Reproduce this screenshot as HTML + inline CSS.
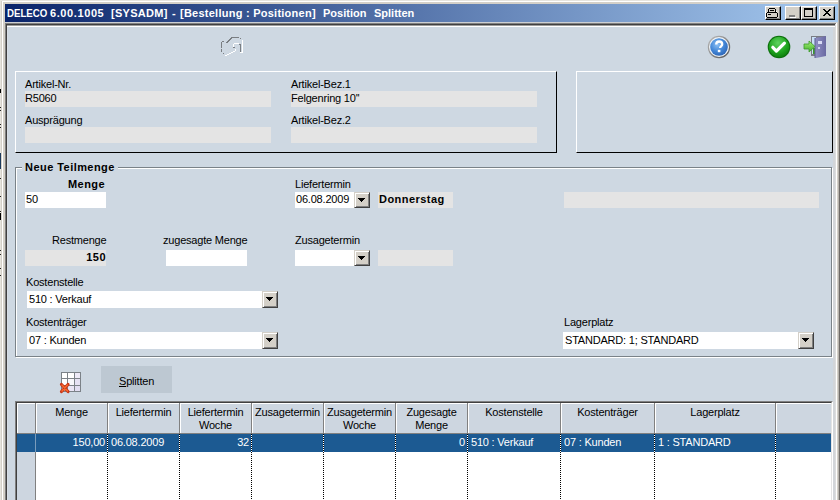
<!DOCTYPE html>
<html><head><meta charset="utf-8">
<style>
*{margin:0;padding:0;box-sizing:border-box}
html,body{width:840px;height:500px;overflow:hidden;background:#D4D0C8}
body{position:relative;font-family:"Liberation Sans",sans-serif;font-size:11px;color:#000}
.a{position:absolute}
.t{position:absolute;white-space:nowrap;line-height:13px;letter-spacing:-0.2px}
.b{font-weight:bold;letter-spacing:0.45px}
.ro{position:absolute;background:#E4E4E4}
.wf{position:absolute;background:#fff}
.btn{position:absolute;background:#D4D0C8;border-top:1px solid #D4D0C8;border-left:1px solid #D4D0C8;border-right:1px solid #404040;border-bottom:1px solid #404040;box-shadow:inset 1px 1px 0 #fff,inset -1px -1px 0 #808080}
.arr{position:absolute;width:7px;height:4px;background:linear-gradient(#000,#000) 0 0/7px 1px no-repeat,linear-gradient(#000,#000) 1px 1px/5px 1px no-repeat,linear-gradient(#000,#000) 2px 2px/3px 1px no-repeat,linear-gradient(#000,#000) 3px 3px/1px 1px no-repeat}
</style></head>
<body>
<!-- window frame -->
<div class="a" style="left:0;top:0;width:1px;height:500px;background:#E6E4DE"></div>
<div class="a" style="left:0;top:0;width:840px;height:1px;background:#E6E4DE"></div>
<div class="a" style="left:2px;top:1px;width:838px;height:1px;background:#fff"></div>
<div class="a" style="left:2px;top:1px;width:1px;height:499px;background:#fff"></div>
<div class="a" style="left:0;top:89px;width:1px;height:4px;background:#000"></div><div class="a" style="left:0;top:107px;width:1px;height:1px;background:#222"></div><div class="a" style="left:0;top:110px;width:1px;height:1px;background:#222"></div><div class="a" style="left:0;top:124px;width:1px;height:1px;background:#222"></div><div class="a" style="left:0;top:127px;width:1px;height:1px;background:#222"></div><div class="a" style="left:0;top:153px;width:1px;height:16px;background:#1C3A5C"></div><div class="a" style="left:0;top:178px;width:1px;height:1px;background:#222"></div><div class="a" style="left:0;top:196px;width:1px;height:1px;background:#222"></div><div class="a" style="left:0;top:211px;width:1px;height:1px;background:#222"></div><div class="a" style="left:0;top:213px;width:1px;height:7px;background:#000"></div><div class="a" style="left:0;top:250px;width:1px;height:1px;background:#222"></div><div class="a" style="left:0;top:254px;width:1px;height:1px;background:#222"></div><div class="a" style="left:0;top:268px;width:1px;height:1px;background:#222"></div><div class="a" style="left:0;top:275px;width:1px;height:1px;background:#222"></div>
<!-- title bar -->
<div class="a" style="left:5px;top:4px;width:833px;height:18px;background:linear-gradient(to right,#0A246A,#A6CAF0)"></div>
<div class="t b" style="left:7px;top:7px;color:#fff;letter-spacing:0;transform:scaleX(0.88);transform-origin:0 0">DELECO</div>
<div class="t b" style="left:50px;top:7px;color:#fff;letter-spacing:0.6px">6.00.1005</div>
<div class="t b" style="left:111px;top:7px;color:#fff;letter-spacing:0.3px">[SYSADM]</div>
<div class="t b" style="left:172px;top:7px;color:#fff;letter-spacing:0">-</div>
<div class="t b" style="left:180px;top:7px;color:#fff;letter-spacing:0.25px">[Bestellung : Positionen]</div>
<div class="t b" style="left:323px;top:7px;color:#fff;letter-spacing:0">Position</div>
<div class="t b" style="left:374px;top:7px;color:#fff;letter-spacing:0">Splitten</div>
<div class="a" style="left:765px;top:6px;width:16px;height:14px;background:#D4D0C8;border-top:1px solid #fff;border-left:1px solid #fff;border-right:1px solid #000;border-bottom:1px solid #000;box-shadow:inset -1px -1px 0 #808080"></div><div class="a" style="left:785px;top:6px;width:16px;height:14px;background:#D4D0C8;border-top:1px solid #fff;border-left:1px solid #fff;border-right:1px solid #000;border-bottom:1px solid #000;box-shadow:inset -1px -1px 0 #808080"></div><div class="a" style="left:801px;top:6px;width:16px;height:14px;background:#D4D0C8;border-top:1px solid #fff;border-left:1px solid #fff;border-right:1px solid #000;border-bottom:1px solid #000;box-shadow:inset -1px -1px 0 #808080"></div><div class="a" style="left:819px;top:6px;width:16px;height:14px;background:#D4D0C8;border-top:1px solid #fff;border-left:1px solid #fff;border-right:1px solid #000;border-bottom:1px solid #000;box-shadow:inset -1px -1px 0 #808080"></div>
<svg class="a" style="left:765px;top:6px" width="16" height="14" shape-rendering="crispEdges">
<path d="M4 2h6v1H4zM3 3h1v3H3zM10 3h1v3h-1zM5 4h4v1H5z" fill="#000"/>
<path d="M2 6h10v1H2zM1 7h1v4H1zM12 7h1v4h-1zM2 11h10v1H2z" fill="#000"/>
<path d="M3 8h3v1H3z" fill="#000"/><path d="M2 7h10v4H2z" fill="#EDEBE6" opacity="0.0"/>
<path d="M11 5h1v1h-1z" fill="#fff"/>
</svg>
<svg class="a" style="left:785px;top:6px" width="16" height="14" shape-rendering="crispEdges">
<path d="M4 9h6v2H4z" fill="#808080"/><path d="M5 11h6v1H5z" fill="#fff"/>
</svg>
<svg class="a" style="left:801px;top:6px" width="16" height="14" shape-rendering="crispEdges">
<path d="M3 2h9v2H3zM3 4h1v7H3zM11 4h1v7h-1zM3 10h9v1H3z" fill="#000"/>
</svg>
<svg class="a" style="left:819px;top:6px" width="16" height="14" shape-rendering="crispEdges">
<path d="M4 3h2v1h1v1h2V4h1V3h2v1h-1v1h-1v1H9v1h1v1h1v1h1v1h-2V9H9V8H7v1H6v1H4V9h1V8h1V7h1V6H6V5H5V4H4z" fill="#000"/>
</svg>
<!-- content area -->
<div class="a" style="left:5px;top:22px;width:833px;height:1px;background:#CDD0D3"></div>
<div class="a" style="left:5px;top:23px;width:1px;height:477px;background:#808080"></div>
<div class="a" style="left:5px;top:23px;width:831px;height:1px;background:#808080"></div>
<div class="a" style="left:6px;top:24px;width:1px;height:476px;background:#404040"></div>
<div class="a" style="left:6px;top:24px;width:830px;height:1px;background:#404040"></div>
<div class="a" style="left:7px;top:25px;width:828px;height:475px;background:#CED8E2;border-top:1px solid #9C9C9C"></div>
<div class="a" style="left:7px;top:26px;width:828px;height:1px;background:#fff"></div>
<div class="a" style="left:7px;top:27px;width:1px;height:473px;background:#D8DEE6"></div>
<div class="a" style="left:833px;top:27px;width:2px;height:473px;background:#D2D5D9"></div>
<div class="a" style="left:835px;top:24px;width:1px;height:476px;background:#DCDCDC"></div>
<div class="a" style="left:836px;top:23px;width:1px;height:477px;background:#fff"></div>
<div class="a" style="left:838px;top:0;width:1px;height:500px;background:#B8B4AE"></div>
<div class="a" style="left:839px;top:0;width:1px;height:500px;background:#6E6A66"></div>
<!-- toolbar icons -->
<svg class="a" style="left:216px;top:32px" width="34" height="30" shape-rendering="crispEdges">
<g fill="#7A7E82">
<path d="M5 10h1v6H5zM5 17h1v3H5zM6 9h2v1H6zM7 21h1v1H7zM10 10h2v1h-2zM11 9h2v1h-2zM12 8h2v1h-2zM13 7h2v1h-2zM14 6h2v1h-2zM15 5h1v1h-1zM16 5h7v1h-7zM24 6h1v1h-1zM24 12h1v8h-1zM17 15h2v1h-2zM23 12h1v1h-1z"/>
</g>
<g fill="#FFFFFF">
<path d="M26 8h1v13h-1zM24 20h2v1h-2zM9 23h2v1H9zM11 22h2v1h-2zM13 21h2v1h-2zM15 20h2v1h-2zM17 19h2v1h-2zM19 17h1v2h-1zM17 12h1v3h-1zM18 11h5v1h-5z"/>
</g>
</svg>
<svg class="a" style="left:707px;top:35px" width="24" height="24">
<defs><radialGradient id="hg" cx="0.4" cy="0.35" r="0.7"><stop offset="0" stop-color="#8CC0F4"/><stop offset="0.55" stop-color="#4488D8"/><stop offset="1" stop-color="#2C64B4"/></radialGradient>
<linearGradient id="hr" x1="0" y1="0" x2="1" y2="1"><stop offset="0" stop-color="#C0C0C0"/><stop offset="1" stop-color="#505050"/></linearGradient></defs>
<circle cx="12" cy="12" r="11.2" fill="url(#hr)"/>
<circle cx="12" cy="12" r="10" fill="#F0F4F8"/>
<circle cx="12" cy="12" r="8.8" fill="url(#hg)"/>
<path d="M9.2 9.6c0-2 1.3-3.1 3-3.1s3 1 3 2.7c0 1.9-2.1 2.2-2.1 3.9" fill="none" stroke="#fff" stroke-width="2.3"/>
<rect x="10.8" y="14.8" width="2.6" height="2.4" fill="#fff"/>
</svg>
<svg class="a" style="left:767px;top:35px" width="24" height="24">
<defs><radialGradient id="gg" cx="0.45" cy="0.3" r="0.75"><stop offset="0" stop-color="#5FD35F"/><stop offset="0.6" stop-color="#1FA51F"/><stop offset="1" stop-color="#0B7A0B"/></radialGradient></defs>
<circle cx="12" cy="12" r="11.3" fill="#0A6E0A"/>
<circle cx="12" cy="12" r="10.3" fill="url(#gg)"/>
<path d="M5.8 12.3l3.6 3.8l8-8" fill="none" stroke="#fff" stroke-width="3.2" stroke-linejoin="round" stroke-linecap="round"/>
</svg>
<svg class="a" style="left:803px;top:35px" width="26" height="24">
<defs><linearGradient id="dg" x1="0" y1="0" x2="1" y2="0"><stop offset="0" stop-color="#9090C4"/><stop offset="1" stop-color="#6A6AA2"/></linearGradient>
<linearGradient id="ag" x1="0" y1="0" x2="0" y2="1"><stop offset="0" stop-color="#A8F078"/><stop offset="1" stop-color="#40B02C"/></linearGradient></defs>
<rect x="8" y="1" width="15" height="20" fill="#7A7C84"/>
<rect x="9" y="2" width="4" height="17" fill="#C8E0F8"/>
<rect x="10" y="13" width="3" height="6" fill="#3C9A2A"/>
<path d="M12 3l11-2v20l-10 2h-1z" fill="url(#dg)"/>
<path d="M12 3v20" stroke="#5C5C90" stroke-width="1"/>
<rect x="15" y="6" width="4" height="3" fill="#D8DAF4"/>
<rect x="15" y="12" width="2" height="2" fill="#CCCEEC"/>
<path d="M1 9h5V6l6 5.5l-6 5.5v-3H1z" fill="url(#ag)" stroke="#3A9A28" stroke-width="0.8"/>
</svg>

<!-- panel 1 -->
<div class="a" style="left:15px;top:71px;width:542px;height:82px;border-left:1px solid #fff;border-top:1px solid #fff;border-right:1px solid #000;border-bottom:1px solid #000"></div>
<div class="t" style="left:25px;top:78px">Artikel-Nr.</div>
<div class="ro" style="left:25px;top:91px;width:246px;height:16px"></div>
<div class="t" style="left:25px;top:92px">R5060</div>
<div class="t" style="left:25px;top:114px">Ausprägung</div>
<div class="ro" style="left:25px;top:127px;width:246px;height:16px"></div>
<div class="t" style="left:291px;top:78px">Artikel-Bez.1</div>
<div class="ro" style="left:291px;top:91px;width:246px;height:16px"></div>
<div class="t" style="left:291px;top:92px">Felgenring 10''</div>
<div class="t" style="left:291px;top:114px">Artikel-Bez.2</div>
<div class="ro" style="left:291px;top:127px;width:246px;height:16px"></div>

<!-- panel 2 -->
<div class="a" style="left:576px;top:71px;width:257px;height:82px;border-left:1px solid #fff;border-top:1px solid #fff;border-right:1px solid #000;border-bottom:1px solid #000"></div>

<!-- group box -->
<div class="a" style="left:15px;top:167px;width:817px;height:190px;border:1px solid #7A8288;box-shadow:inset 1px 1px 0 #fff,1px 1px 0 #fff"></div>
<div class="t b" style="left:22px;top:161px;background:#CED8E2;padding:0 3px">Neue Teilmenge</div>

<div class="t b" style="left:68px;top:178px">Menge</div>
<div class="wf" style="left:25px;top:192px;width:81px;height:16px"></div>
<div class="t" style="left:26px;top:193px">50</div>

<div class="t" style="left:295px;top:178px">Liefertermin</div>
<div class="wf" style="left:295px;top:192px;width:59px;height:16px"></div>
<div class="t" style="left:296px;top:193px">06.08.2009</div>
<div class="btn" style="left:354px;top:192px;width:16px;height:16px"><div class="arr" style="left:3px;top:5px"></div></div>
<div class="ro" style="left:378px;top:192px;width:75px;height:16px"></div>
<div class="t b" style="left:379px;top:193px">Donnerstag</div>
<div class="ro" style="left:564px;top:192px;width:255px;height:16px"></div>

<div class="t" style="left:52px;top:234px">Restmenge</div>
<div class="ro" style="left:25px;top:250px;width:81px;height:16px"></div>
<div class="t b" style="left:25px;top:251px;width:81px;text-align:right">150</div>
<div class="t" style="left:163px;top:234px">zugesagte Menge</div>
<div class="wf" style="left:166px;top:250px;width:81px;height:16px"></div>
<div class="t" style="left:295px;top:234px">Zusagetermin</div>
<div class="wf" style="left:295px;top:250px;width:59px;height:16px"></div>
<div class="btn" style="left:354px;top:250px;width:16px;height:16px"><div class="arr" style="left:3px;top:5px"></div></div>
<div class="ro" style="left:378px;top:250px;width:75px;height:16px"></div>

<div class="t" style="left:26px;top:276px">Kostenstelle</div>
<div class="wf" style="left:27px;top:291px;width:236px;height:17px"></div>
<div class="t" style="left:29px;top:293px">510 : Verkauf</div>
<div class="btn" style="left:262px;top:291px;width:16px;height:17px"><div class="arr" style="left:3px;top:5px"></div></div>

<div class="t" style="left:26px;top:316px">Kostenträger</div>
<div class="wf" style="left:27px;top:332px;width:236px;height:17px"></div>
<div class="t" style="left:29px;top:334px">07 : Kunden</div>
<div class="btn" style="left:262px;top:332px;width:16px;height:17px"><div class="arr" style="left:3px;top:5px"></div></div>

<div class="t" style="left:564px;top:316px">Lagerplatz</div>
<div class="wf" style="left:563px;top:332px;width:236px;height:17px"></div>
<div class="t" style="left:565px;top:334px">STANDARD: 1; STANDARD</div>
<div class="btn" style="left:798px;top:332px;width:16px;height:17px"><div class="arr" style="left:3px;top:5px"></div></div>

<!-- splitten bar -->
<div class="a" style="left:101px;top:366px;width:71px;height:27px;background:#BDC8D2"></div>
<div class="t" style="left:119px;top:375px"><u>S</u>plitten</div>

<!-- grid -->
<div class="a" style="left:15px;top:401px;width:818px;height:99px;background:#fff;border-left:1px solid #808080;border-top:1px solid #808080;border-right:1px solid #fff"></div>
<div class="a" style="left:16px;top:402px;width:816px;height:98px;border-left:1px solid #404040;border-top:1px solid #404040;border-right:1px solid #E4E4E4"></div>
<div class="a" style="left:17px;top:403px;width:814px;height:31px;background:#CDD6E0;border-bottom:1px solid #808080"></div>
<div class="a" style="left:17px;top:434px;width:814px;height:18px;background:#1C5A92"></div>
<div class="a" style="left:17px;top:452px;width:18px;height:48px;background:#CDD6E0"></div>
<div class="a" style="left:17px;top:403px;width:18px;height:30px;border-top:1px solid #fff;border-left:1px solid #fff"></div>
<div class="a" style="left:35px;top:403px;width:1px;height:31px;background:#808080"></div>
<div class="a" style="left:35px;top:434px;width:1px;height:66px;background:#808080"></div>
<div class="a" style="left:36px;top:403px;width:71px;height:30px;border-top:1px solid #fff;border-left:1px solid #fff"></div>
<div class="a" style="left:107px;top:403px;width:1px;height:31px;background:#808080"></div>
<div class="a" style="left:107px;top:434px;width:1px;height:66px;background:repeating-linear-gradient(to bottom,#000 0,#000 1px,#fff 1px,#fff 2px)"></div>
<div class="t" style="left:36px;top:406px;width:71px;text-align:center">Menge</div>
<div class="a" style="left:108px;top:403px;width:71px;height:30px;border-top:1px solid #fff;border-left:1px solid #fff"></div>
<div class="a" style="left:179px;top:403px;width:1px;height:31px;background:#808080"></div>
<div class="a" style="left:179px;top:434px;width:1px;height:66px;background:repeating-linear-gradient(to bottom,#000 0,#000 1px,#fff 1px,#fff 2px)"></div>
<div class="t" style="left:108px;top:406px;width:71px;text-align:center">Liefertermin</div>
<div class="a" style="left:180px;top:403px;width:71px;height:30px;border-top:1px solid #fff;border-left:1px solid #fff"></div>
<div class="a" style="left:251px;top:403px;width:1px;height:31px;background:#808080"></div>
<div class="a" style="left:251px;top:434px;width:1px;height:66px;background:repeating-linear-gradient(to bottom,#000 0,#000 1px,#fff 1px,#fff 2px)"></div>
<div class="t" style="left:180px;top:406px;width:71px;text-align:center">Liefertermin<br>Woche</div>
<div class="a" style="left:252px;top:403px;width:71px;height:30px;border-top:1px solid #fff;border-left:1px solid #fff"></div>
<div class="a" style="left:323px;top:403px;width:1px;height:31px;background:#808080"></div>
<div class="a" style="left:323px;top:434px;width:1px;height:66px;background:repeating-linear-gradient(to bottom,#000 0,#000 1px,#fff 1px,#fff 2px)"></div>
<div class="t" style="left:252px;top:406px;width:71px;text-align:center">Zusagetermin</div>
<div class="a" style="left:324px;top:403px;width:71px;height:30px;border-top:1px solid #fff;border-left:1px solid #fff"></div>
<div class="a" style="left:395px;top:403px;width:1px;height:31px;background:#808080"></div>
<div class="a" style="left:395px;top:434px;width:1px;height:66px;background:repeating-linear-gradient(to bottom,#000 0,#000 1px,#fff 1px,#fff 2px)"></div>
<div class="t" style="left:324px;top:406px;width:71px;text-align:center">Zusagetermin<br>Woche</div>
<div class="a" style="left:396px;top:403px;width:71px;height:30px;border-top:1px solid #fff;border-left:1px solid #fff"></div>
<div class="a" style="left:467px;top:403px;width:1px;height:31px;background:#808080"></div>
<div class="a" style="left:467px;top:434px;width:1px;height:66px;background:repeating-linear-gradient(to bottom,#000 0,#000 1px,#fff 1px,#fff 2px)"></div>
<div class="t" style="left:396px;top:406px;width:71px;text-align:center">Zugesagte<br>Menge</div>
<div class="a" style="left:468px;top:403px;width:92px;height:30px;border-top:1px solid #fff;border-left:1px solid #fff"></div>
<div class="a" style="left:560px;top:403px;width:1px;height:31px;background:#808080"></div>
<div class="a" style="left:560px;top:434px;width:1px;height:66px;background:repeating-linear-gradient(to bottom,#000 0,#000 1px,#fff 1px,#fff 2px)"></div>
<div class="t" style="left:468px;top:406px;width:92px;text-align:center">Kostenstelle</div>
<div class="a" style="left:561px;top:403px;width:93px;height:30px;border-top:1px solid #fff;border-left:1px solid #fff"></div>
<div class="a" style="left:654px;top:403px;width:1px;height:31px;background:#808080"></div>
<div class="a" style="left:654px;top:434px;width:1px;height:66px;background:repeating-linear-gradient(to bottom,#000 0,#000 1px,#fff 1px,#fff 2px)"></div>
<div class="t" style="left:561px;top:406px;width:93px;text-align:center">Kostenträger</div>
<div class="a" style="left:655px;top:403px;width:120px;height:30px;border-top:1px solid #fff;border-left:1px solid #fff"></div>
<div class="a" style="left:775px;top:403px;width:1px;height:31px;background:#808080"></div>
<div class="a" style="left:775px;top:434px;width:1px;height:66px;background:repeating-linear-gradient(to bottom,#000 0,#000 1px,#fff 1px,#fff 2px)"></div>
<div class="t" style="left:655px;top:406px;width:120px;text-align:center">Lagerplatz</div>
<div class="a" style="left:776px;top:403px;width:55px;height:30px;border-top:1px solid #fff;border-left:1px solid #fff"></div>
<div class="a" style="left:35px;top:434px;width:1px;height:18px;background:#7A9CBC"></div>
<div class="t" style="left:36px;top:436px;width:69px;text-align:right;color:#fff">150,00</div>
<div class="t" style="left:111px;top:436px;color:#fff">06.08.2009</div>
<div class="t" style="left:180px;top:436px;width:69px;text-align:right;color:#fff">32</div>
<div class="t" style="left:396px;top:436px;width:69px;text-align:right;color:#fff">0</div>
<div class="t" style="left:471px;top:436px;color:#fff">510 : Verkauf</div>
<div class="t" style="left:564px;top:436px;color:#fff">07 : Kunden</div>
<div class="t" style="left:658px;top:436px;color:#fff">1 : STANDARD</div>
<svg class="a" style="left:59px;top:370px" width="26" height="26" shape-rendering="crispEdges">
<rect x="2" y="2" width="20" height="20" fill="#7C8288"/>
<rect x="3" y="3" width="5" height="5" fill="#fff"/><rect x="9" y="3" width="6" height="5" fill="#fff"/><rect x="16" y="3" width="5" height="5" fill="#EEEAF8"/>
<rect x="3" y="9" width="5" height="6" fill="#fff"/><rect x="9" y="9" width="6" height="6" fill="#F8F8FC"/><rect x="16" y="9" width="5" height="6" fill="#E6E2F4"/>
<rect x="3" y="16" width="5" height="5" fill="#F4F2FA"/><rect x="9" y="16" width="6" height="5" fill="#EAE6F6"/><rect x="16" y="16" width="5" height="5" fill="#E2DEF2"/>
</svg>
<svg class="a" style="left:59px;top:382px" width="12" height="12">
<path d="M2.5 2.5l6.5 7M9 2.5l-6.5 7" stroke="#C83414" stroke-width="3.2" stroke-linecap="round"/>
<path d="M3 3l5.5 6M8.5 3l-5.5 6" stroke="#F86A30" stroke-width="1.4" stroke-linecap="round"/>
</svg>
</body></html>
